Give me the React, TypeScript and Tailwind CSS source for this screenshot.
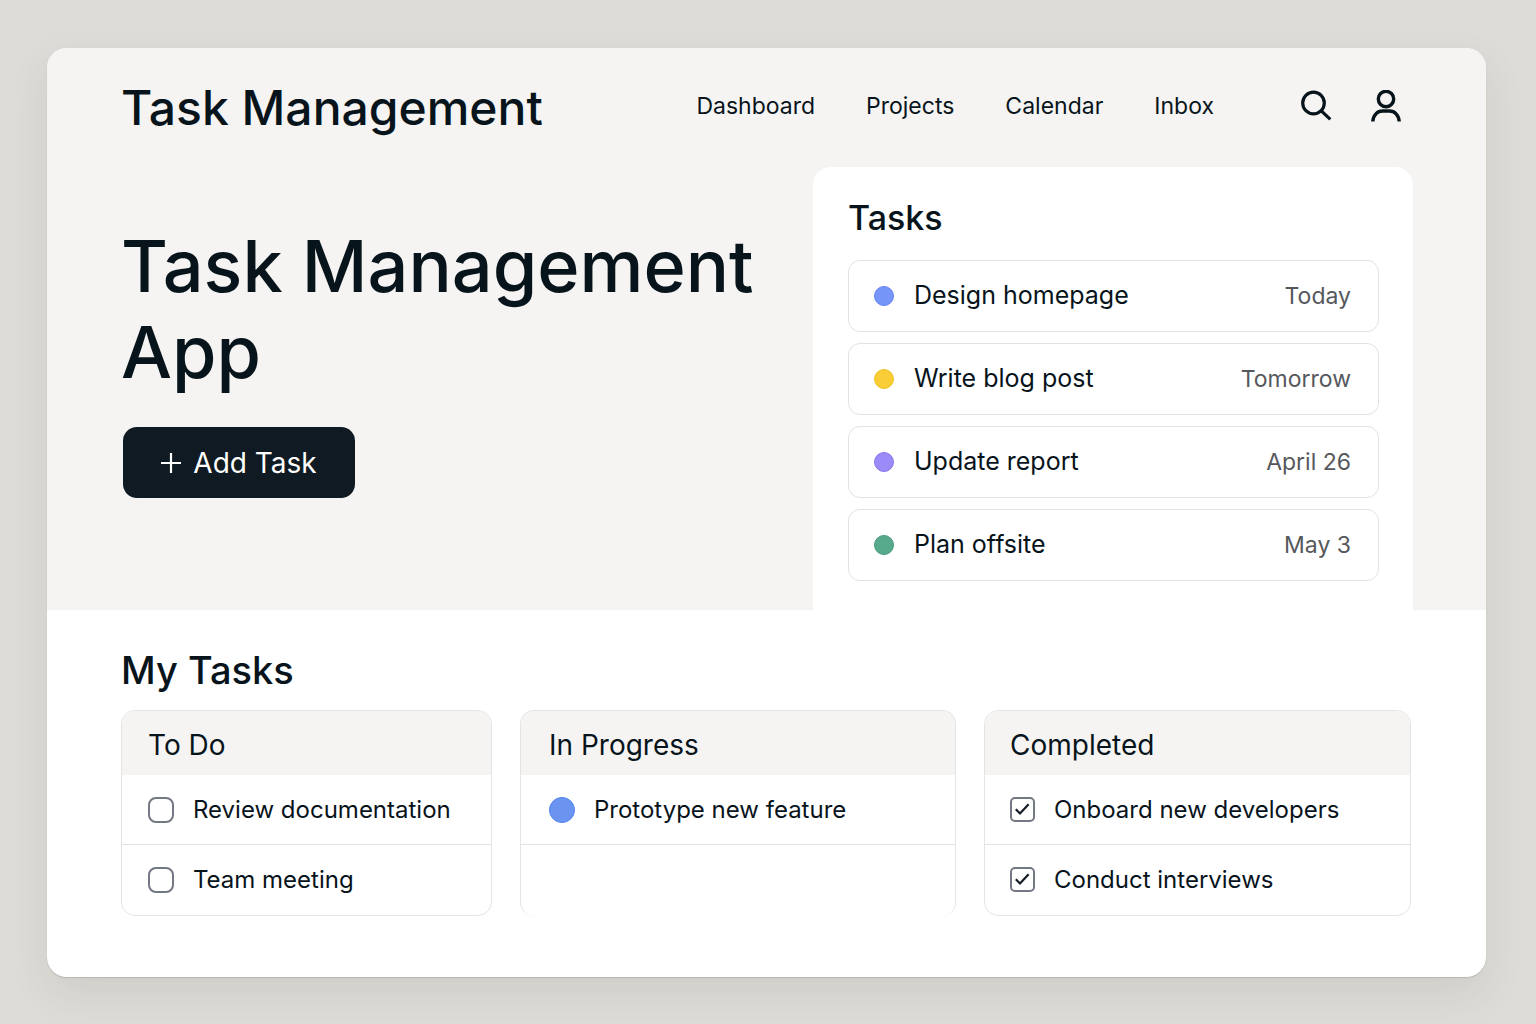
import React from "react";

const tasks = [
  { name: "Design homepage", due: "Today", dot: "bg-[#7596f8] border-[#5f84f5]" },
  { name: "Write blog post", due: "Tomorrow", dot: "bg-[#f9cd35] border-[#efc226]" },
  { name: "Update report", due: "April 26", dot: "bg-[#9b8bf8] border-[#8876f0]" },
  { name: "Plan offsite", due: "May 3", dot: "bg-[#58aa8c] border-[#46997a]" },
];

const links = ["Dashboard", "Projects", "Calendar", "Inbox"];

function SearchIcon() {
  return (
    <svg viewBox="0 0 32 32" fill="none" stroke="currentColor" strokeWidth="3.2" className="size-8" aria-hidden="true">
      <circle cx="13.5" cy="13" r="10.8" />
      <path d="M21.3 20.8l9 8.6" />
    </svg>
  );
}

function UserIcon() {
  return (
    <svg viewBox="0 0 32 32" fill="none" stroke="currentColor" strokeWidth="3.4" className="size-8" aria-hidden="true">
      <circle cx="16" cy="9" r="7.7" />
      <path d="M2.8 31.500C3.2 25 7.500 21 12.500 21h7C24.500 21 28.800 25 29.2 31.500" />
    </svg>
  );
}

function CheckRow({ label, done = false }: { label: string; done?: boolean }) {
  return (
    <label className="flex h-[69px] items-center gap-[19px]">
      <span className={done ? "relative size-[25px] shrink-0" : "relative size-[26px] shrink-0"}>
        <input
          type="checkbox"
          defaultChecked={done}
          className="peer block size-full appearance-none rounded-lg border-2 border-[#747884] bg-white checked:rounded-[5px]"
        />
        <svg
          viewBox="0 0 25 25"
          fill="none"
          stroke="#141c26"
          strokeWidth="2.2"
          className="pointer-events-none absolute inset-0 hidden peer-checked:block"
          aria-hidden="true"
        >
          <path d="M5.8 12.3l4.2 4.2 8.6-9.2" />
        </svg>
      </span>
      <span className="whitespace-nowrap">{label}</span>
    </label>
  );
}

type ColumnProps = { title: string; frame?: string; inset: string; children: React.ReactNode };

function Column({ title, frame = "border", inset, children }: ColumnProps) {
  return (
    <section className={`overflow-hidden rounded-[14px] border-[#e4e4e4] bg-white ${frame}`}>
      <h3 className={`flex h-16 items-center bg-[#f5f4f2] pt-1 text-[28px] ${inset}`}>{title}</h3>
      <ul className="divide-y divide-[#e2e2e2] text-[24px]">
        {React.Children.map(children, (child) => (
          <li className={inset}>{child}</li>
        ))}
      </ul>
    </section>
  );
}

export default function App() {
  return (
    <div className="min-h-screen bg-[#dddcd8] pt-12 pr-[50px] pb-[47px] pl-[47px] font-['Inter',sans-serif] text-[#08141c]">
      <main className="overflow-hidden rounded-[20px] bg-white shadow-[0_1px_1px_rgba(60,50,40,0.16),0_16px_40px_rgba(60,50,40,0.09)]">
        <div className="bg-[#f5f4f2]">
          <header className="flex h-[119px] items-center justify-between pr-[84px] pl-[74px]">
            <p className="text-[48px] font-medium">Task Management</p>
            <div className="flex items-center gap-[86px] pb-1">
              <nav className="flex gap-[51px] pt-0.5 text-[23px]">
                {links.map((l) => (
                  <a key={l} href="#">
                    {l}
                  </a>
                ))}
              </nav>
              <div className="flex gap-[38px]">
                <button type="button" aria-label="Search">
                  <SearchIcon />
                </button>
                <button type="button" aria-label="Account">
                  <UserIcon />
                </button>
              </div>
            </div>
          </header>
          <div className="flex justify-between pr-[73px] pl-[74px]">
            <div className="pt-14">
              <h1 className="text-[72px] leading-[86px] font-medium">
                Task Management
                <br />
                App
              </h1>
              <button
                type="button"
                className="mt-8 ml-0.5 flex h-[71px] w-[232px] items-center justify-center gap-3 rounded-[14px] bg-[#0f1a22] text-[28px] text-white"
              >
                <svg viewBox="0 0 20 20" fill="none" stroke="currentColor" strokeWidth="2.2" className="size-5" aria-hidden="true">
                  <path d="M10 0v20M0 10h20" />
                </svg>
                Add Task
              </button>
            </div>
            <section className="w-[600px] rounded-t-[18px] bg-white pt-7 pr-[34px] pb-[29px] pl-[35px]">
              <h2 className="text-[34px] leading-[46px] font-medium">Tasks</h2>
              <ul className="mt-[19px] flex flex-col gap-[11px]">
                {tasks.map((t) => (
                  <li key={t.name} className="flex h-[72px] items-center rounded-xl border border-[#e2e2e2] px-[25px]">
                    <span className={`size-5 rounded-full border ${t.dot}`} />
                    <span className="ml-5 text-[25px]">{t.name}</span>
                    <span className="ml-auto pr-0.5 text-[23px] text-[#56585c]">{t.due}</span>
                  </li>
                ))}
              </ul>
            </section>
          </div>
        </div>
        <div className="pt-8 pr-[75px] pb-[61px] pl-[74px]">
          <h2 className="text-[38px] leading-[56px] font-medium">My Tasks</h2>
          <div className="mt-3 grid h-[206px] grid-cols-[371fr_436fr_427fr] gap-7">
            <Column title="To Do" inset="px-[26px]">
              <CheckRow label="Review documentation" />
              <CheckRow label="Team meeting" />
            </Column>
            <Column title="In Progress" frame="border-x border-t" inset="px-7">
              <div className="flex h-[69px] items-center gap-[19px]">
                <span className="size-[26px] rounded-full border border-[#4f80ee] bg-[#6b94f0]" />
                <span>Prototype new feature</span>
              </div>
              <div />
            </Column>
            <Column title="Completed" inset="px-[25px]">
              <CheckRow done label="Onboard new developers" />
              <CheckRow done label="Conduct interviews" />
            </Column>
          </div>
        </div>
      </main>
    </div>
  );
}
